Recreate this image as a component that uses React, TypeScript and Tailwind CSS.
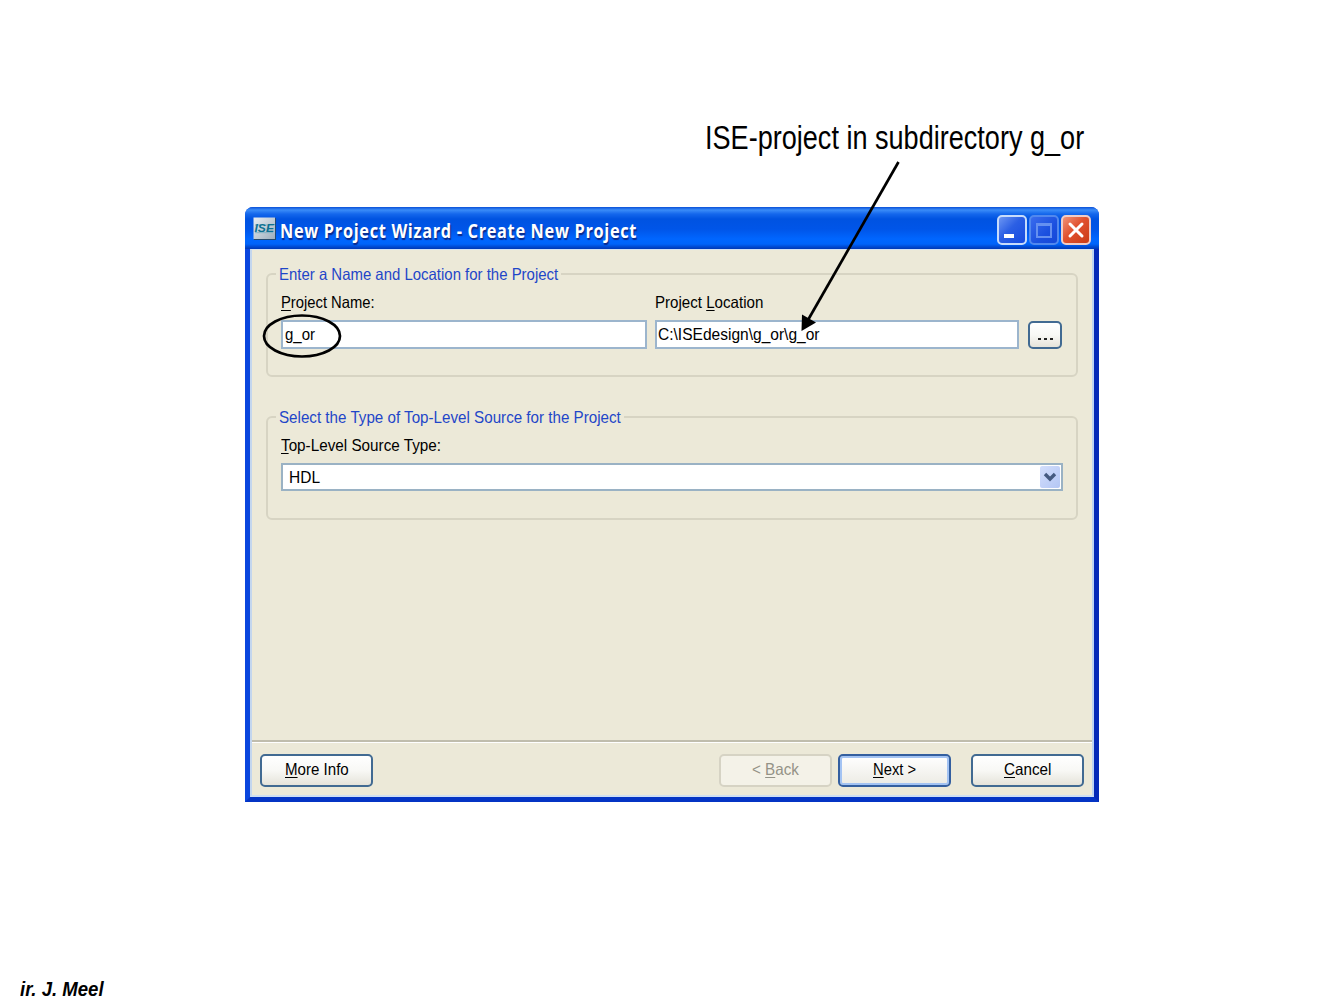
import { useLayoutEffect, useRef, useState, type ReactNode } from "react";

/** Single line of text condensed or expanded horizontally to an exact width. */
function Fit({ width, className = "", children }: { width: number; className?: string; children: ReactNode }) {
  const ref = useRef<HTMLSpanElement>(null);
  const [scale, setScale] = useState(1);
  useLayoutEffect(() => {
    if (ref.current) setScale(width / ref.current.offsetWidth);
  }, [width]);
  return (
    <span className={`block shrink-0 whitespace-nowrap ${className}`} style={{ width }}>
      <span ref={ref} className="inline-block origin-left whitespace-nowrap" style={{ transform: `scaleX(${scale})` }}>
        {children}
      </span>
    </span>
  );
}

function Key({ children }: { children: string }) {
  return <span className="underline decoration-1 underline-offset-[2px]">{children}</span>;
}

const label = "text-[16.5px] leading-5";
const raised =
  "flex h-[33px] w-[113px] justify-center rounded-[5px] border-2 pt-[3px]";
const normal = "border-[#416a92] bg-linear-to-b from-white via-[#f8f8f5] to-[#e5e3da]";

function TitleBar() {
  return (
    <div className="flex h-[42px] items-start rounded-t-[8px] bg-[linear-gradient(to_bottom,#0a50d8_0px,#3a8cf8_3px,#1467ec_7px,#0053e1_12px,#0055e8_22px,#0066ff_32px,#0064fa_37px,#0048d0_40px,#0038b4_42px)] pl-[8px] pr-[8px] pt-[8px]">
      <svg className="mt-[2px]" width="24" height="24" viewBox="0 0 24 24">
        <defs>
          <linearGradient id="tile" x1="0" y1="0" x2="1" y2="1">
            <stop offset="0" stopColor="#e8edf2" />
            <stop offset="1" stopColor="#9daebd" />
          </linearGradient>
        </defs>
        <path d="M1 1h22v22H1z" fill="#24496f" />
        <path d="M0.5 0.5h21.500v21.500H0.500z" fill="url(#tile)" />
        <path d="M2 8h18M2 15.700h18" stroke="#7fb0c4" strokeWidth="1" />
        <text x="1.5" y="15.300" fontFamily="Liberation Sans" fontSize="10.5" fontWeight="bold" fontStyle="italic" fill="#0e7192" textLength="19.5" lengthAdjust="spacingAndGlyphs">ISE</text>
      </svg>
      <Fit width={357} className="ml-[3px] mt-[2px] font-['Open_Sans'] text-[19.5px] font-bold leading-[28px] tracking-[0.8px] text-white [text-shadow:1px_2px_1px_#0a2a8c]">
        New Project Wizard - Create New Project
      </Fit>
      <div className="ml-auto flex gap-[2px]">
        <button className="flex h-[30px] w-[30px] items-end rounded-[5px] border-2 border-[#c8dcfb] bg-[linear-gradient(135deg,#6c96f3,#2b5fe4_45%,#174be0)] pb-[5px] pl-[5px]">
          <span className="h-[4px] w-[10px] bg-white" />
        </button>
        <button className="flex h-[30px] w-[30px] items-center justify-center rounded-[5px] border-2 border-[#5188ee] bg-[linear-gradient(135deg,#3a6ced,#1b50df_60%,#1547d8)]">
          <span className="h-[15px] w-[16px] border-2 border-t-[3px] border-[#6590f0]" />
        </button>
        <button className="flex h-[30px] w-[30px] items-center justify-center rounded-[5px] border-2 border-[#f0cdc7] bg-[linear-gradient(135deg,#f09277,#e0512f_45%,#cb3b15)]">
          <svg width="18" height="18" viewBox="0 0 18 18">
            <path d="M3 3l12 12M15 3L3 15" stroke="white" strokeWidth="3" strokeLinecap="round" />
          </svg>
        </button>
      </div>
    </div>
  );
}

function Group({ title, width, className = "", children }: { title: string; width: number; className?: string; children: ReactNode }) {
  return (
    <fieldset className={`h-[113px] w-[812px] rounded-[6px] border-2 border-[#d7d4c3] ${className}`}>
      <legend className="ml-[8px] px-[3px]">
        <Fit width={width} className={`${label} text-[#1f46c8]`}>{title}</Fit>
      </legend>
      {children}
    </fieldset>
  );
}

function Dialog() {
  return (
    <div className="ml-[245px] flex h-[595px] w-[854px] flex-col rounded-t-[8px] bg-[#0a46dc]">
      <TitleBar />
      <div className="flex grow flex-col border-x-[5px] border-b-[5px] border-b-[#0434c4] border-l-[#0a46de] border-r-[#0429b8] shadow-[inset_-1px_-1px_0_#00138c]">
        <div className="flex grow flex-col border-2 border-t border-[#d3e2f4] border-l-[#c3d6ee] border-r-[#bdd3f2] border-b-[#cfdff2] bg-[#ece9d8]">
          <div className="pl-[14px] pt-[14px]">
            <Group title="Enter a Name and Location for the Project" width={279}>
              <div className="flex pl-[13px] pt-[8px]">
                <div>
                  <Fit width={94} className={label}><Key>P</Key>roject Name:</Fit>
                  <div className="mt-[8px] h-[29px] w-[366px] border-2 border-[#9cb5cd] bg-white pl-[2px] pt-[2px]">
                    <Fit width={30} className={label}>g_or</Fit>
                  </div>
                </div>
                <div className="ml-[8px]">
                  <Fit width={108} className={label}>Project <Key>L</Key>ocation</Fit>
                  <div className="mt-[8px] h-[29px] w-[364px] border-2 border-[#9cb5cd] bg-white pl-[1px] pt-[2px]">
                    <Fit width={162} className={label}>C:\ISEdesign\g_or\g_or</Fit>
                  </div>
                </div>
                <button className={`ml-[9px] mt-[29px] flex h-[28px] w-[34px] items-center justify-center gap-[3px] rounded-[5px] border-2 pt-[7px] ${normal}`}>
                  <span className="h-[2px] w-[3px] bg-[#222]" />
                  <span className="h-[2px] w-[3px] bg-[#222]" />
                  <span className="h-[2px] w-[3px] bg-[#222]" />
                </button>
              </div>
            </Group>
            <Group title="Select the Type of Top-Level Source for the Project" width={342} className="mt-[30px]">
              <div className="pl-[13px] pt-[8px]">
                <Fit width={160} className={label}><Key>T</Key>op-Level Source Type:</Fit>
                <div className="mt-[8px] flex h-[28px] w-[782px] justify-between border-2 border-[#9ab2c4] bg-white pl-[6px] pr-[1px]">
                  <Fit width={31} className={`${label} pt-[2px]`}>HDL</Fit>
                  <span className="mt-[1px] flex h-[22px] w-[20px] items-center justify-center rounded-[2px] bg-linear-to-br from-[#d3defc] to-[#b3c6f4]">
                    <svg width="14" height="10" viewBox="0 0 14 10">
                      <path d="M2 2l5 5 5-5" fill="none" stroke="#455a80" strokeWidth="3.4" />
                    </svg>
                  </span>
                </div>
              </div>
            </Group>
          </div>
          <div className="mt-auto h-[3px] shrink-0 border-b border-t-2 border-b-white border-t-[#c0bdad] bg-[#ece9d8]" />
          <div className="flex h-[52px] shrink-0 pl-[8px] pt-[11px]">
            <button className={`${raised} ${normal}`}><Fit width={64} className={label}><Key>M</Key>ore Info</Fit></button>
            <button className={`${raised} ml-[346px] border-[#d6d3c4] bg-[#f4f2e8] text-[#949387]`}><Fit width={47} className={label}>&lt; <Key>B</Key>ack</Fit></button>
            <button className={`${raised} ml-[6px] border-[#345f9f] bg-linear-to-b from-white to-[#ecebe4] shadow-[inset_0_0_0_2px_#a3c3f3]`}><Fit width={43} className={label}><Key>N</Key>ext &gt;</Fit></button>
            <button className={`${raised} ml-[20px] ${normal}`}><Fit width={47} className={label}><Key>C</Key>ancel</Fit></button>
          </div>
        </div>
      </div>
    </div>
  );
}

export default function App() {
  return (
    <main className="relative flex h-[1008px] w-[1344px] flex-col overflow-hidden bg-white font-['Liberation_Sans',sans-serif] text-black">
      <div className="h-[207px] shrink-0 pl-[705px] pt-[118px]">
        <Fit width={379} className="text-[33px] leading-[40px]">ISE-project in subdirectory g_or</Fit>
      </div>
      <Dialog />
      <div className="mt-auto h-[31px] pl-[20px]">
        <Fit width={84} className="text-[21px] font-bold italic leading-6">ir. J. Meel</Fit>
      </div>
      <svg className="pointer-events-none absolute inset-0" width="1344" height="1008" viewBox="0 0 1344 1008">
        <ellipse cx="302" cy="336" rx="38" ry="20.5" fill="none" stroke="black" strokeWidth="2.7" />
        <path d="M898.5 162L808 320" stroke="black" strokeWidth="2.7" />
        <path d="M802 314.5L816 322.500L801.500 331z" fill="black" />
      </svg>
    </main>
  );
}
